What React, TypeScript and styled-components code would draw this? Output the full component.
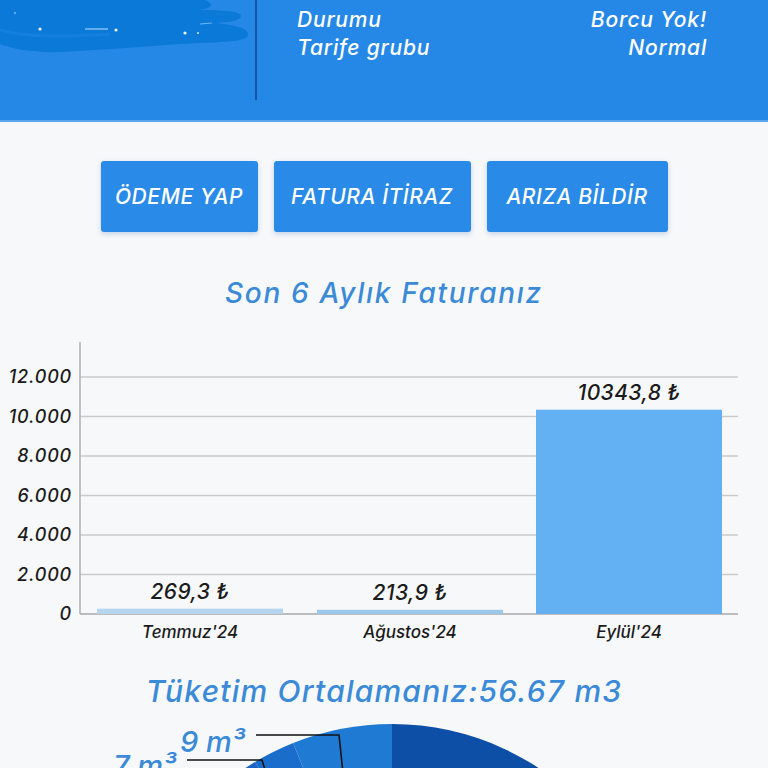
import React from "react";
import styled, { createGlobalStyle } from "styled-components";

const FONT = 'Inter, "Liberation Sans", sans-serif';

const Global = createGlobalStyle`
  html, body { margin: 0; padding: 0; background: #f7f8fa; }
  body { font-family: Inter, "Liberation Sans", sans-serif; overflow: hidden; }
  * { box-sizing: border-box; }
`;

const Page = styled.div`
  width: 768px;
  height: 768px;
  overflow: hidden;
  background: #f7f8fa;
  display: flex;
  flex-direction: column;
  align-items: center;
`;

const Header = styled.header`
  width: 100%;
  height: 122px;
  flex: none;
  background: #2688e6;
  border-bottom: 2px solid #5da6ee;
  display: flex;
  align-items: flex-start;
`;

const Account = styled.div`
  width: 255px;
  height: 100px;
  flex: none;
`;

const Divider = styled.div`
  width: 2px;
  height: 100px;
  background: #1657a8;
  flex: none;
`;

const InfoList = styled.div`
  flex: 1;
  padding: 6px 61px 0 40px;
  display: flex;
  flex-direction: column;
`;

const InfoRow = styled.div`
  display: flex;
  justify-content: space-between;
  height: 28px;
  line-height: 28px;
  color: #ffffff;
  font-style: italic;
  font-weight: 500;
  font-size: 21px;
  letter-spacing: 0.8px;
`;

const Actions = styled.div`
  margin-top: 39px;
  display: flex;
  gap: 16px;
`;

const ActionButton = styled.button<{ $w: number }>`
  width: ${(p) => p.$w}px;
  height: 71px;
  border: none;
  border-radius: 3px;
  background: #2a8ae7;
  color: #ffffff;
  font-family: Inter, "Liberation Sans", sans-serif;
  font-style: italic;
  font-weight: 500;
  font-size: 21px;
  letter-spacing: 0.6px;
  box-shadow: 0 2px 5px rgba(30, 100, 180, 0.25);
  padding: 0;
`;

const SectionTitle = styled.h2<{ $size: number; $top: number; $ls: number }>`
  margin: ${(p) => p.$top}px 0 0;
  font-size: ${(p) => p.$size}px;
  line-height: ${(p) => p.$size + 6}px;
  font-style: italic;
  font-weight: 500;
  letter-spacing: ${(p) => p.$ls}px;
  color: #3b8ad8;
  text-align: center;
  width: 100%;
`;

const ChartBox = styled.svg`
  display: block;
  margin-top: 20px;
  flex: none;
`;

const PieBox = styled.svg`
  display: block;
  margin-top: 4px;
  flex: none;
`;

const bars = [
  { label: "Temmuz'24", value: 269.3, text: "269,3 ₺", x: 97, color: "#b6d6f0" },
  { label: "Ağustos'24", value: 213.9, text: "213,9 ₺", x: 317, color: "#9cc8ec" },
  { label: "Eylül'24", value: 10343.8, text: "10343,8 ₺", x: 536, color: "#63b0f2" },
];

const ticks = ["0", "2.000", "4.000", "6.000", "8.000", "10.000", "12.000"];

function BarChart() {
  const zero = 284;
  const step = 39.5;
  return (
    <ChartBox width={768} height={320} viewBox="0 0 768 320">
      {ticks.map((t, i) => {
        const y = zero - i * step;
        return (
          <g key={t}>
            <line x1={80} x2={738} y1={y} y2={y} stroke={i === 0 ? "#a8a8a8" : "#cbcbcb"} strokeWidth={1.5} />
            <text x={72} y={y + 6} textAnchor="end" fontFamily={FONT} fontStyle="italic" fontWeight={500} fontSize={18} letterSpacing={0.8} fill="#1b1b1b">
              {t}
            </text>
          </g>
        );
      })}
      <line x1={80} x2={80} y1={12} y2={zero} stroke="#b0b0b0" strokeWidth={1.5} />
      {bars.map((b) => {
        const h = (b.value / 2000) * step;
        const top = zero - h;
        return (
          <g key={b.label}>
            <rect x={b.x} y={top} width={186} height={h} fill={b.color} />
            <text x={b.x + 93} y={top - 10} textAnchor="middle" fontFamily={FONT} fontStyle="italic" fontWeight={500} fontSize={21} letterSpacing={0.4} fill="#1b1b1b">
              {b.text}
            </text>
            <text x={b.x + 93} y={308} textAnchor="middle" fontFamily={FONT} fontStyle="italic" fontWeight={500} fontSize={17} fill="#1b1b1b">
              {b.label}
            </text>
          </g>
        );
      })}
    </ChartBox>
  );
}

function polar(cx: number, cy: number, r: number, deg: number) {
  const a = ((deg - 90) * Math.PI) / 180;
  return [cx + r * Math.cos(a), cy + r * Math.sin(a)];
}

function slice(cx: number, cy: number, r: number, a0: number, a1: number) {
  const [x0, y0] = polar(cx, cy, r, a0);
  const [x1, y1] = polar(cx, cy, r, a1);
  const large = a1 - a0 > 180 ? 1 : 0;
  return `M${cx},${cy} L${x0},${y0} A${r},${r} 0 ${large} 1 ${x1},${y1} Z`;
}

function PieChart() {
  const cx = 392;
  const cy = 277;
  const r = 266;
  const parts = [
    { a0: 0, a1: 200, c: "#0d4ea6" },
    { a0: 200, a1: 300, c: "#1458b8" },
    { a0: 300, a1: 329, c: "#1762c2" },
    { a0: 329, a1: 338.2, c: "#1b6dcb" },
    { a0: 338.2, a1: 360, c: "#1f7ad3" },
  ];
  return (
    <PieBox width={768} height={90} viewBox="0 0 768 90">
      {parts.map((p, i) => (
        <path key={i} d={slice(cx, cy, r, p.a0, p.a1)} fill={p.c} />
      ))}
      <polyline points="256,22 339,22 343,60" fill="none" stroke="#111" strokeWidth={1.6} />
      <polyline points="187,47 262,47 266,60" fill="none" stroke="#111" strokeWidth={1.6} />
      <text x={180} y={39} fontFamily={FONT} fontStyle="italic" fontWeight={500} fontSize={29} fill="#3b8ad8">
        9 m³
      </text>
      <text x={113} y={63} fontFamily={FONT} fontStyle="italic" fontWeight={500} fontSize={29} fill="#3b8ad8">
        7 m³
      </text>
    </PieBox>
  );
}

function Scribble() {
  return (
    <svg width={255} height={100} viewBox="0 0 255 100">
      <path
        d="M0,0 L205,0 C215,4 212,8 200,10 C230,10 245,12 240,18 C236,22 225,22 215,23 C240,25 250,30 248,36 C246,42 220,42 180,44 C140,47 100,50 60,52 C30,53 10,48 0,44 Z"
        fill="#0b79d8"
      />
      <path d="M0,30 C20,36 60,38 110,34" stroke="#1a84e0" strokeWidth={3} fill="none" opacity={0.6} />
      <circle cx={40} cy={29} r={1.6} fill="#e6f3ff" />
      <circle cx={116} cy={30} r={1.6} fill="#e6f3ff" />
      <path d="M85,29 L108,29" stroke="#9fcdf5" strokeWidth={1.2} />
      <circle cx={185} cy={33} r={1.6} fill="#e6f3ff" />
      <circle cx={198} cy={33} r={1} fill="#cfe7fb" />
      <path d="M200,24 L212,23" stroke="#6fb6f0" strokeWidth={1.2} />
      <circle cx={15} cy={13} r={1.2} fill="#5aaaf0" />
    </svg>
  );
}

export default function App() {
  return (
    <>
      <Global />
      <Page>
        <Header>
          <Account>
            <Scribble />
          </Account>
          <Divider />
          <InfoList>
            <InfoRow>
              <span>Durumu</span>
              <span>Borcu Yok!</span>
            </InfoRow>
            <InfoRow>
              <span>Tarife grubu</span>
              <span>Normal</span>
            </InfoRow>
          </InfoList>
        </Header>
        <Actions>
          <ActionButton $w={157}>ÖDEME YAP</ActionButton>
          <ActionButton $w={197}>FATURA İTİRAZ</ActionButton>
          <ActionButton $w={181}>ARIZA BİLDİR</ActionButton>
        </Actions>
        <SectionTitle $size={28} $top={44} $ls={1.7}>Son 6 Aylık Faturanız</SectionTitle>
        <BarChart />
        <SectionTitle $size={30} $top={23} $ls={1.2}>Tüketim Ortalamanız:56.67 m3</SectionTitle>
        <PieChart />
      </Page>
    </>
  );
}
